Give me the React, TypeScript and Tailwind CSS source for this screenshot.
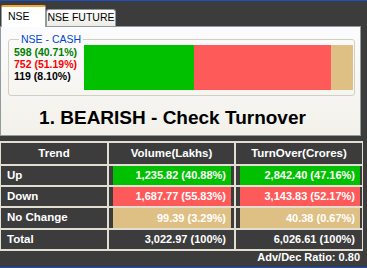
import React from "react";

const bars = [
  { pct: 40.71, cls: "bg-[#00c000]" },
  { pct: 51.19, cls: "bg-[#ff5a5a]" },
  { pct: 8.1, cls: "bg-[#dfc084]" },
];

const rows = [
  { label: "Up", vol: "1,235.82 (40.88%)", to: "2,842.40 (47.16%)", bg: "bg-[#00c000]" },
  { label: "Down", vol: "1,687.77 (55.83%)", to: "3,143.83 (52.17%)", bg: "bg-[#ff5a5a]" },
  { label: "No Change", vol: "99.39 (3.29%)", to: "40.38 (0.67%)", bg: "bg-[#dfc084]" },
  { label: "Total", vol: "3,022.97 (100%)", to: "6,026.61 (100%)", bg: "" },
];

export default function App() {
  return (
    <div
      className="w-[367px] h-[268px] bg-[#3c3c3c] flex flex-col overflow-hidden"
      style={{ fontFamily: '"Liberation Sans", Arial, sans-serif' }}
    >
      <div className="h-[1px] bg-[#1d4fc4]" />
      {/* tabs */}
      <div className="mt-[4px] h-[21px] flex items-end pl-[1px]">
        <div className="relative z-10 -mb-[1px] w-[45px] h-[22px] bg-white border-x border-[#919b9c] border-t-[2px] border-t-[#f7a531] rounded-t-[2px] pl-[6px] flex items-center text-[10.5px] text-black">
          NSE
        </div>
        <div className="w-[70px] h-[17px] bg-gradient-to-b from-white to-[#ecebe5] border border-b-0 border-[#919b9c] rounded-t-[3px] flex items-center justify-center text-[10.5px] text-black">
          NSE FUTURE
        </div>
      </div>
      {/* panel */}
      <div className="w-[361px] h-[110px] border border-[#919b9c] bg-gradient-to-b from-[#fcfcfe] to-[#f2f1ea] flex flex-col pl-[7px] pt-[6px]">
        <fieldset className="w-[347px] border border-[#d0d0bf] rounded-[3px] pl-[5px] pr-[1px] pb-[5px]">
          <legend className="ml-[5px] px-[2px] text-[10.5px] leading-[12px] text-[#0046d5]">
            NSE - CASH
          </legend>
          <div className="flex">
            <div className="flex-1 pt-[1px] flex flex-col text-[10.5px] leading-[12px] font-bold">
              <span className="text-[#008000]">598 (40.71%)</span>
              <span className="text-[#ff0000]">752 (51.19%)</span>
              <span className="text-black">119 (8.10%)</span>
            </div>
            <div className="w-[269px] h-[45px] flex">
              {bars.map((b, i) => (
                <div key={i} className={b.cls} style={{ width: `${b.pct}%` }} />
              ))}
            </div>
          </div>
        </fieldset>
        <div className="flex-1 flex items-center justify-center pt-[6px] pr-[23px] text-[19px] font-bold text-black">
          1. BEARISH - Check Turnover
        </div>
      </div>
      {/* table */}
      <div className="mt-[5px] w-[363px] bg-[#e2ded1] px-[1px] pt-[2px] pb-[2px] grid grid-cols-[106px_125px_126px] grid-rows-[21px_19px_19px_20px_19px] gap-[2px] text-[11px] font-bold text-white">
        <div className="bg-[#3c3c3c] flex items-center justify-center text-[11.5px]">Trend</div>
        <div className="bg-[#3c3c3c] flex items-center justify-center text-[11.5px]">Volume(Lakhs)</div>
        <div className="bg-[#3c3c3c] flex items-center justify-center text-[11.5px]">TurnOver(Crores)</div>
        {rows.map((r) => (
          <React.Fragment key={r.label}>
            <div className="bg-[#3c3c3c] flex items-center pl-[6px] text-[11.5px]">{r.label}</div>
            <div className="bg-[#3c3c3c] pl-[4px] pr-[3px]">
              <div className={`h-full flex items-center justify-end pr-[5px] ${r.bg}`}>{r.vol}</div>
            </div>
            <div className="bg-[#3c3c3c] pl-[4px] pr-[2px]">
              <div className={`h-full flex items-center justify-end pr-[5px] ${r.bg}`}>{r.to}</div>
            </div>
          </React.Fragment>
        ))}
      </div>
      <div className="h-[12px] flex items-center justify-end pr-[7px] text-[11px] font-bold text-white">
        Adv/Dec Ratio: 0.80
      </div>
      <div className="flex-1" />
      <div className="h-[1px] bg-[#1d4fc4]" />
    </div>
  );
}
